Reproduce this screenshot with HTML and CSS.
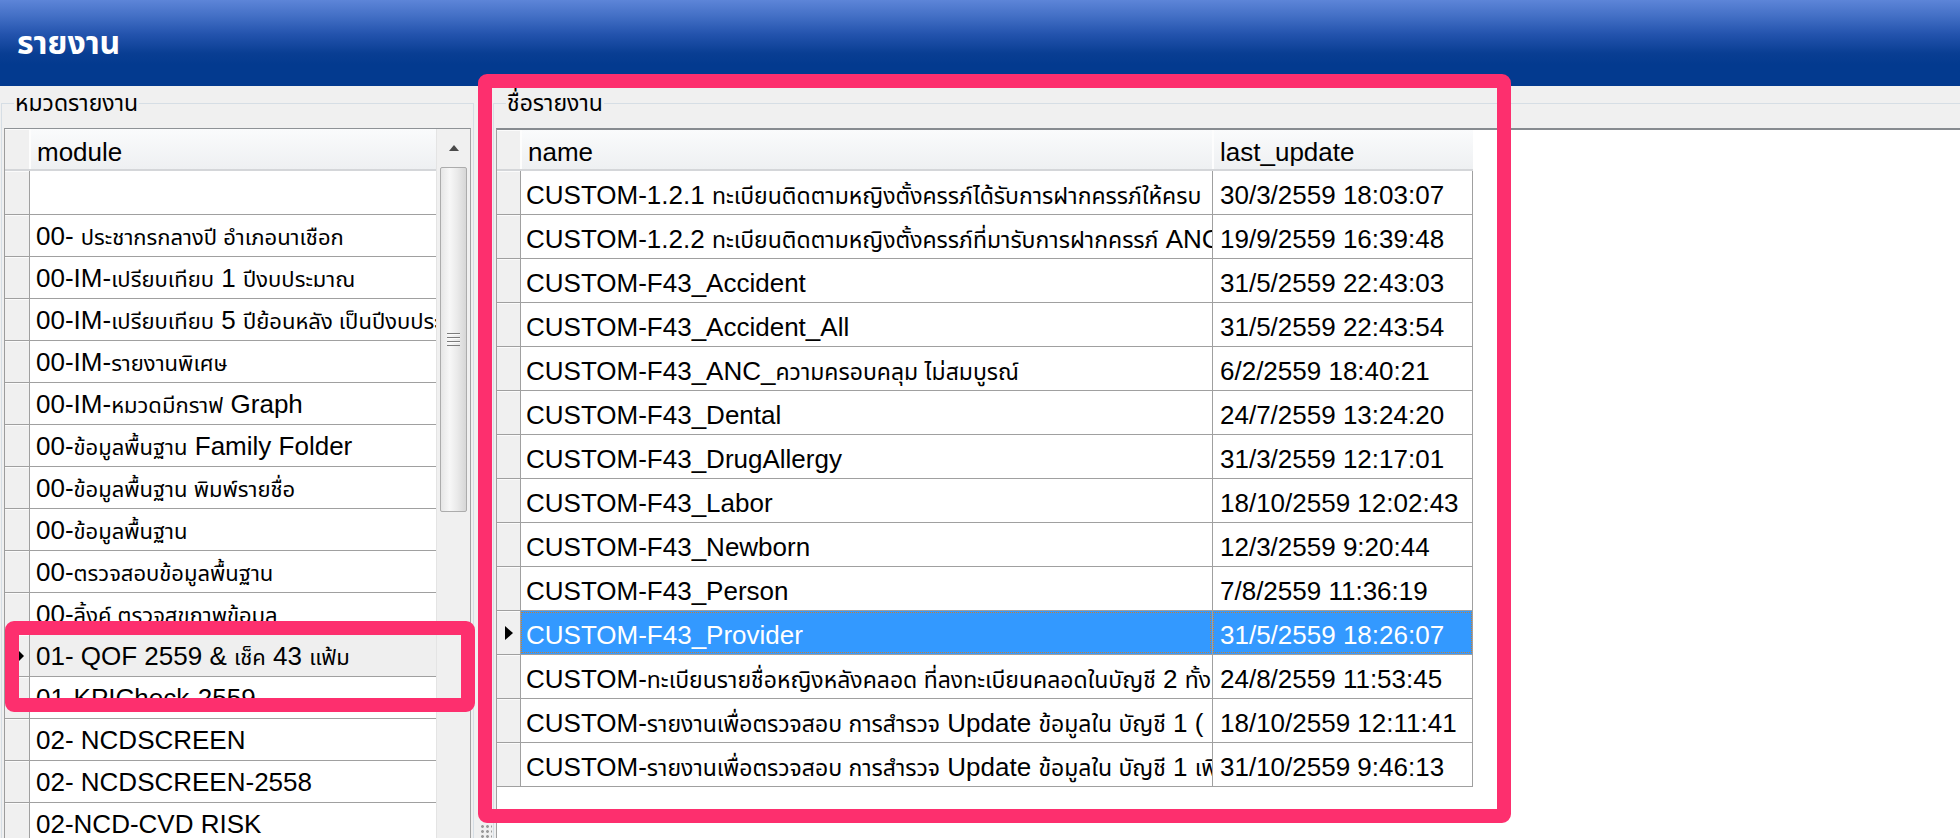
FILE: index.html
```html
<!DOCTYPE html>
<html lang="th">
<head>
<meta charset="utf-8">
<title>รายงาน</title>
<link rel="stylesheet" href="styles.css">
</head>
<body>
<header class="titlebar"><h1>รายงาน</h1></header>
<main class="content">
  <fieldset class="group group-left">
    <legend>หมวดรายงาน</legend>
    <div class="grid grid-left">
      <div class="ltable">
        <div class="lhead"><div class="hcell rh"></div><div class="hcell">module</div></div>
        <div class="lrow first"><div class="rh"></div><div class="cell"></div></div>
        <div class="lrow"><div class="rh"></div><div class="cell">00- <span class="th">ประชากรกลางปี อำเภอนาเชือก</span></div></div>
        <div class="lrow"><div class="rh"></div><div class="cell">00-IM-<span class="th">เปรียบเทียบ</span> 1 <span class="th">ปีงบประมาณ</span></div></div>
        <div class="lrow"><div class="rh"></div><div class="cell">00-IM-<span class="th">เปรียบเทียบ</span> 5 <span class="th">ปีย้อนหลัง เป็นปีงบประมาณ</span></div></div>
        <div class="lrow"><div class="rh"></div><div class="cell">00-IM-<span class="th">รายงานพิเศษ</span></div></div>
        <div class="lrow"><div class="rh"></div><div class="cell">00-IM-<span class="th">หมวดมีกราฟ</span> Graph</div></div>
        <div class="lrow"><div class="rh"></div><div class="cell">00-<span class="th">ข้อมูลพื้นฐาน</span> Family Folder</div></div>
        <div class="lrow"><div class="rh"></div><div class="cell">00-<span class="th">ข้อมูลพื้นฐาน พิมพ์รายชื่อ</span></div></div>
        <div class="lrow"><div class="rh"></div><div class="cell">00-<span class="th">ข้อมูลพื้นฐาน</span></div></div>
        <div class="lrow"><div class="rh"></div><div class="cell">00-<span class="th">ตรวจสอบข้อมูลพื้นฐาน</span></div></div>
        <div class="lrow"><div class="rh"></div><div class="cell">00-<span class="th">ลิ้งค์ ตรวจสุขภาพข้อมูล</span></div></div>
        <div class="lrow selected"><div class="rh"><svg class="ptr" width="6" height="12" viewBox="0 0 6 12"><polygon points="0,0 6,6 0,12" fill="#000"/></svg></div><div class="cell">01- QOF 2559 &amp; <span class="th">เช็ค</span> 43 <span class="th">แฟ้ม</span></div></div>
        <div class="lrow"><div class="rh"></div><div class="cell">01-KPICheck-2559</div></div>
        <div class="lrow"><div class="rh"></div><div class="cell">02- NCDSCREEN</div></div>
        <div class="lrow"><div class="rh"></div><div class="cell">02- NCDSCREEN-2558</div></div>
        <div class="lrow"><div class="rh"></div><div class="cell">02-NCD-CVD RISK</div></div>
      </div>
      <div class="vscroll">
        <div class="sbtn"><svg width="10" height="6" viewBox="0 0 10 6"><polygon points="0,6 5,0 10,6" fill="#4a4a4a"/></svg></div>
        <div class="thumb"><div class="grip"></div></div>
      </div>
    </div>
  </fieldset>
  <div class="gap"><div class="sizegrip"></div></div>
  <fieldset class="group group-right">
    <legend>ชื่อรายงาน</legend>
    <div class="grid grid-right">
      <div class="rhead"><div class="hcell rh"></div><div class="hcell">name</div><div class="hcell">last_update</div></div>
      <div class="rrow"><div class="rh"></div><div class="cell">CUSTOM-1.2.1 <span class="th">ทะเบียนติดตามหญิงตั้งครรภ์ได้รับการฝากครรภ์ให้ครบ</span></div><div class="cell">30/3/2559 18:03:07</div></div>
      <div class="rrow"><div class="rh"></div><div class="cell">CUSTOM-1.2.2 <span class="th">ทะเบียนติดตามหญิงตั้งครรภ์ที่มารับการฝากครรภ์</span> ANC</div><div class="cell">19/9/2559 16:39:48</div></div>
      <div class="rrow"><div class="rh"></div><div class="cell">CUSTOM-F43_Accident</div><div class="cell">31/5/2559 22:43:03</div></div>
      <div class="rrow"><div class="rh"></div><div class="cell">CUSTOM-F43_Accident_All</div><div class="cell">31/5/2559 22:43:54</div></div>
      <div class="rrow"><div class="rh"></div><div class="cell">CUSTOM-F43_ANC_<span class="th">ความครอบคลุม ไม่สมบูรณ์</span></div><div class="cell">6/2/2559 18:40:21</div></div>
      <div class="rrow"><div class="rh"></div><div class="cell">CUSTOM-F43_Dental</div><div class="cell">24/7/2559 13:24:20</div></div>
      <div class="rrow"><div class="rh"></div><div class="cell">CUSTOM-F43_DrugAllergy</div><div class="cell">31/3/2559 12:17:01</div></div>
      <div class="rrow"><div class="rh"></div><div class="cell">CUSTOM-F43_Labor</div><div class="cell">18/10/2559 12:02:43</div></div>
      <div class="rrow"><div class="rh"></div><div class="cell">CUSTOM-F43_Newborn</div><div class="cell">12/3/2559 9:20:44</div></div>
      <div class="rrow"><div class="rh"></div><div class="cell">CUSTOM-F43_Person</div><div class="cell">7/8/2559 11:36:19</div></div>
      <div class="rrow selected"><div class="rh"><svg class="ptr" width="8" height="14" viewBox="0 0 8 14"><polygon points="0,0 8,7 0,14" fill="#000"/></svg></div><div class="cell">CUSTOM-F43_Provider</div><div class="cell">31/5/2559 18:26:07</div></div>
      <div class="rrow"><div class="rh"></div><div class="cell">CUSTOM-<span class="th">ทะเบียนรายชื่อหญิงหลังคลอด ที่ลงทะเบียนคลอดในบัญชี</span> 2 <span class="th">ทั้ง</span></div><div class="cell">24/8/2559 11:53:45</div></div>
      <div class="rrow"><div class="rh"></div><div class="cell">CUSTOM-<span class="th">รายงานเพื่อตรวจสอบ การสำรวจ</span> Update <span class="th">ข้อมูลใน บัญชี</span> 1 (</div><div class="cell">18/10/2559 12:11:41</div></div>
      <div class="rrow"><div class="rh"></div><div class="cell">CUSTOM-<span class="th">รายงานเพื่อตรวจสอบ การสำรวจ</span> Update <span class="th">ข้อมูลใน บัญชี</span> 1 <span class="th">เพิ่ม</span></div><div class="cell">31/10/2559 9:46:13</div></div>
    </div>
  </fieldset>
</main>
<div class="annot annot-left"></div>
<div class="annot annot-right"></div>
</body>
</html>
```

FILE: styles.css
```css
* { box-sizing: border-box; }
html, body { margin: 0; padding: 0; }
body {
  width: 1960px;
  height: 838px;
  overflow: hidden;
  position: relative;
  background: #f0f0f0;
  color: #000;
  font-family: "Liberation Sans", "Noto Sans Thai", "Noto Sans Thai UI", "Loma", "Garuda", "Tlwg Typo", "Noto Sans", sans-serif;
}

.titlebar {
  height: 86px;
  display: flex;
  align-items: center;
  padding-left: 17px;
  background: linear-gradient(180deg, #5d85d8 0%, #4470c6 18%, #2353ad 40%, #093e93 62%, #033a8f 75%, #033a8f 100%);
}
.titlebar h1 {
  margin: 0;
  font-size: 32px;
  font-weight: bold;
  color: #fff;
  line-height: 1;
}

.content {
  display: flex;
  height: 752px;
  padding-top: 5px;
  padding-left: 1px;
}

.group {
  margin: 0;
  min-width: 0;
  border: 1px solid #d6dee5;
  border-bottom: none;
  padding: 13px 2px 0 2px;
  display: flex;
  flex-direction: column;
}
.group legend {
  font-size: 23px;
  line-height: 24px;
  padding: 0 1px;
  margin-left: 10px;
}
.group-left { flex: 0 0 473px; }
.group-right { flex: 0 0 1480px; border-right: none; }

.gap {
  flex: 0 0 19px;
  display: flex;
  align-items: flex-end;
  justify-content: center;
}
.sizegrip {
  width: 12px;
  height: 14px;
  margin-left: 4px;
  background-image: radial-gradient(circle, #9a9a9a 1.2px, transparent 1.6px);
  background-size: 5px 5px;
}

.grid {
  flex: 1;
  background: #fff;
  overflow: hidden;
}

/* left grid */
.grid-left {
  display: flex;
  border-top: 1px solid #8e9296;
  border-left: 1px solid #9c9c9c;
  border-right: 1px solid #a3a3a3;
}
.ltable { flex: 0 0 431px; }
.lhead, .rhead {
  display: grid;
  background: linear-gradient(180deg, #fafbfc, #eef0f2);
  border-bottom: 2px solid #d4d6d9;
}
.lhead { grid-template-columns: 24px 1fr; height: 42px; }
.hcell {
  font-size: 26px;
  line-height: 46px;
  padding-left: 6px;
  border-left: 2px solid #fdfdfd;
  white-space: nowrap;
  overflow: hidden;
}
.hcell.rh { border-left: none; padding: 0; background: #f0f0f0; }

.lrow, .rrow {
  display: grid;
  border-bottom: 1px solid #a0a0a0;
}
.lrow { grid-template-columns: 24px 1fr; height: 42px; }
.lrow.first { height: 44px; }
.rh {
  background: #f0f0f0;
  border-top: 1px solid #fbfbfb;
  display: flex;
  align-items: center;
  justify-content: flex-end;
  padding-right: 5px;
}
.cell {
  border-left: 1px solid #a0a0a0;
  font-size: 26px;
  line-height: 42px;
  padding-left: 6px;
  white-space: nowrap;
  overflow: hidden;
}
.cell .th { font-size: 22px; }
.lrow.selected .cell { background: #efefef; }

.vscroll {
  flex: 1;
  background: #f0f0f0;
  border-left: 1px solid #e4e4e4;
  display: flex;
  flex-direction: column;
  align-items: center;
}
.sbtn {
  height: 38px;
  width: 100%;
  display: flex;
  align-items: center;
  justify-content: center;
}
.thumb {
  width: 27px;
  height: 345px;
  border: 1px solid #acacac;
  border-radius: 2px;
  background: linear-gradient(90deg, #e6e6e6 0%, #f7f7f7 35%, #eaeaea 65%, #d6d6d6 100%);
  display: flex;
  align-items: center;
  justify-content: center;
}
.grip {
  width: 13px;
  height: 13px;
  background: repeating-linear-gradient(180deg, #7c7c7c 0 1px, #fbfbfb 1px 2px, transparent 2px 4px);
}

/* right grid */
.grid-right {
  border-top: 2px solid #878b90;
  border-left: 1px solid #a0a0a0;
}
.rhead { grid-template-columns: 23px 692px 261px; height: 41px; width: 976px; }
.rhead .hcell { line-height: 45px; padding-left: 6px; }
.rrow { grid-template-columns: 23px 692px 261px; height: 44px; width: 976px; }
.rrow .cell { line-height: 48px; padding-left: 5px; }
.rrow .cell .th { font-size: 23px; }
.rrow .cell:last-child { border-right: 1px solid #a0a0a0; padding-left: 7px; }
.rrow .rh { padding-right: 7px; }
.rrow.selected .cell {
  background: #3399ff;
  color: #fff;
  outline: 1px dotted #c4803a;
  outline-offset: -2px;
}

/* annotation highlight boxes drawn over the screenshot */
.annot {
  position: absolute;
  border: 14px solid #fd2f6e;
  border-radius: 9px;
  pointer-events: none;
}
.annot-left { left: 5px; top: 621px; width: 470px; height: 91px; }
.annot-right { left: 478px; top: 74px; width: 1033px; height: 749px; }
```
